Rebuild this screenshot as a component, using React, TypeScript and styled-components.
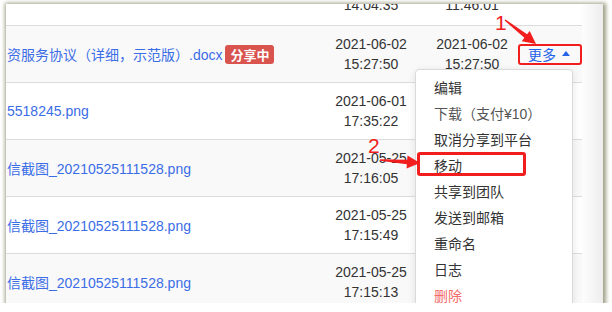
import React from "react";
import styled, { createGlobalStyle } from "styled-components";

const GlobalStyle = createGlobalStyle`
  html, body {
    margin: 0;
    padding: 0;
    background: #ffffff;
  }
  body {
    font-family: "Liberation Sans", "Noto Sans CJK SC", sans-serif;
    font-size: 14px;
    color: #333;
  }
`;

type FileRow = {
  name: string;
  shared?: boolean;
  created: [string, string];
  updated: [string, string];
  more?: boolean;
};

const rows: FileRow[] = [
  { name: "资服务协议（详细，示范版）.docx", shared: true, created: ["2021-06-02", "15:27:50"], updated: ["2021-06-02", "15:27:50"], more: true },
  { name: "5518245.png", created: ["2021-06-01", "17:35:22"], updated: ["2021-06-01", "17:35:22"] },
  { name: "信截图_20210525111528.png", created: ["2021-05-25", "17:16:05"], updated: ["2021-05-25", "17:16:05"] },
  { name: "信截图_20210525111528.png", created: ["2021-05-25", "17:15:49"], updated: ["2021-05-25", "17:15:49"] },
  { name: "信截图_20210525111528.png", created: ["2021-05-25", "17:15:13"], updated: ["2021-05-25", "17:15:13"] },
];

type MenuItemData = { label: string; tone?: "muted" | "danger" };

const menuItems: MenuItemData[] = [
  { label: "编辑" },
  { label: "下载（支付¥10）", tone: "muted" },
  { label: "取消分享到平台" },
  { label: "移动" },
  { label: "共享到团队" },
  { label: "发送到邮箱" },
  { label: "重命名" },
  { label: "日志" },
  { label: "删除", tone: "danger" },
];

const Frame = styled.div`
  position: relative;
  margin: 4px 0 0 6px;
  width: 597px;
  height: 299px;
  display: flex;
  overflow: hidden;
  background: #fff;
  box-shadow: 1px 1px 4px 2px rgba(128, 128, 96, 0.75);
`;

const Table = styled.div`
  width: 576px;
  display: flex;
  flex-direction: column;
`;

const Scrollbar = styled.div`
  flex: 1;
  background: linear-gradient(to right, #fdfdfd, #ededed);
`;

const Row = styled.div<{ $striped?: boolean; $head?: boolean }>`
  display: grid;
  grid-template-columns: 316px 98px 104px 58px;
  height: ${({ $head }) => ($head ? "21px" : "56px")};
  border-bottom: 1px solid #dcdcdc;
  background: ${({ $striped }) => ($striped ? "#f9f9f9" : "#fff")};
  align-items: center;
  flex-shrink: 0;
`;

const NameCell = styled.div`
  display: flex;
  align-items: center;
  gap: 3px;
  padding-left: 1px;
  white-space: nowrap;
  overflow: hidden;
`;

const FileName = styled.span`
  color: #3b6de6;
  font-size: 14px;
`;

const Badge = styled.span`
  display: inline-flex;
  align-items: center;
  height: 19px;
  padding: 0 5px;
  border-radius: 3px;
  background: #d9534f;
  color: #fff;
  font-weight: bold;
  font-size: 13px;
`;

const DateCell = styled.div<{ $clipped?: boolean }>`
  text-align: center;
  line-height: 20px;
  color: #333;
  align-self: ${({ $clipped }) => ($clipped ? "start" : "center")};
  margin-top: ${({ $clipped }) => ($clipped ? "-29px" : "0")};
`;

const ActionCell = styled.div`
  padding-left: 4px;
  display: flex;
  align-items: center;
  gap: 6px;
  color: #2563e8;
`;

const Caret = styled.span`
  width: 0;
  height: 0;
  border-left: 4px solid transparent;
  border-right: 4px solid transparent;
  border-bottom: 5px solid #2563e8;
  margin-top: -1px;
`;

const Menu = styled.ul`
  position: absolute;
  left: 409px;
  top: 65px;
  width: 156px;
  margin: 0;
  padding: 5px 0;
  list-style: none;
  background: #fff;
  border: 1px solid #dadada;
  border-radius: 4px;
  box-shadow: 0 2px 8px rgba(0, 0, 0, 0.1);
`;

const MenuItem = styled.li<{ $tone?: "muted" | "danger" }>`
  height: 26px;
  line-height: 26px;
  padding-left: 18px;
  font-size: 14px;
  white-space: nowrap;
  color: ${({ $tone }) =>
    $tone === "danger" ? "#f46b6b" : $tone === "muted" ? "#555" : "#333"};
`;

const Highlight = styled.div<{ $left: number; $top: number; $w: number; $h: number; $bw: number }>`
  position: absolute;
  left: ${({ $left }) => $left}px;
  top: ${({ $top }) => $top}px;
  width: ${({ $w }) => $w}px;
  height: ${({ $h }) => $h}px;
  box-sizing: border-box;
  border: ${({ $bw }) => $bw}px solid #f21d1d;
  border-radius: 3px;
  pointer-events: none;
`;

const StepLabel = styled.span<{ $left: number; $top: number }>`
  position: absolute;
  left: ${({ $left }) => $left}px;
  top: ${({ $top }) => $top}px;
  color: #ee1c1c;
  font-family: "Liberation Sans", sans-serif;
  font-size: 21px;
  line-height: 1;
`;

const Overlay = styled.svg`
  position: absolute;
  left: 0;
  top: 0;
  pointer-events: none;
`;

// tapered arrow: thin tail, widening shaft, triangular head
function arrowPoints(x1: number, y1: number, x2: number, y2: number) {
  const dx = x2 - x1;
  const dy = y2 - y1;
  const len = Math.hypot(dx, dy);
  const ux = dx / len;
  const uy = dy / len;
  const nx = -uy;
  const ny = ux;
  const headL = 13;
  const bx = x2 - ux * headL;
  const by = y2 - uy * headL;
  const p = (x: number, y: number, w: number) => `${x + nx * w},${y + ny * w}`;
  return [
    p(x1, y1, 0.7),
    p(bx, by, 2.2),
    p(bx, by, 6.5),
    `${x2},${y2}`,
    p(bx, by, -6.5),
    p(bx, by, -2.2),
    p(x1, y1, -0.7),
  ].join(" ");
}

export default function App() {
  return (
    <>
      <GlobalStyle />
      <Frame>
        <Table>
          <Row $head>
            <NameCell />
            <DateCell $clipped>
              2021-06-02
              <br />
              14:04:35
            </DateCell>
            <DateCell $clipped>
              2021-06-02
              <br />
              11:46:01
            </DateCell>
            <div />
          </Row>
          {rows.map((r, i) => (
            <Row key={i} $striped={i % 2 === 0}>
              <NameCell>
                <FileName>{r.name}</FileName>
                {r.shared && <Badge>分享中</Badge>}
              </NameCell>
              <DateCell>
                {r.created[0]}
                <br />
                {r.created[1]}
              </DateCell>
              <DateCell>
                {r.updated[0]}
                <br />
                {r.updated[1]}
              </DateCell>
              <ActionCell>
                {r.more && (
                  <>
                    更多
                    <Caret />
                  </>
                )}
              </ActionCell>
            </Row>
          ))}
        </Table>
        <Scrollbar />

        <Menu>
          {menuItems.map((m) => (
            <MenuItem key={m.label} $tone={m.tone}>
              {m.label}
            </MenuItem>
          ))}
        </Menu>

        <Highlight $left={512} $top={40} $w={64} $h={21} $bw={2.5} />
        <Highlight $left={411} $top={148} $w={109} $h={24} $bw={3} />
        <StepLabel $left={489} $top={8}>1</StepLabel>
        <StepLabel $left={362} $top={131}>2</StepLabel>

        <Overlay width="597" height="299">
          <polygon points={arrowPoints(499, 16, 530, 40)} fill="#f21d1d" />
          <polygon points={arrowPoints(374, 156, 414, 159)} fill="#f21d1d" />
        </Overlay>
      </Frame>
    </>
  );
}
